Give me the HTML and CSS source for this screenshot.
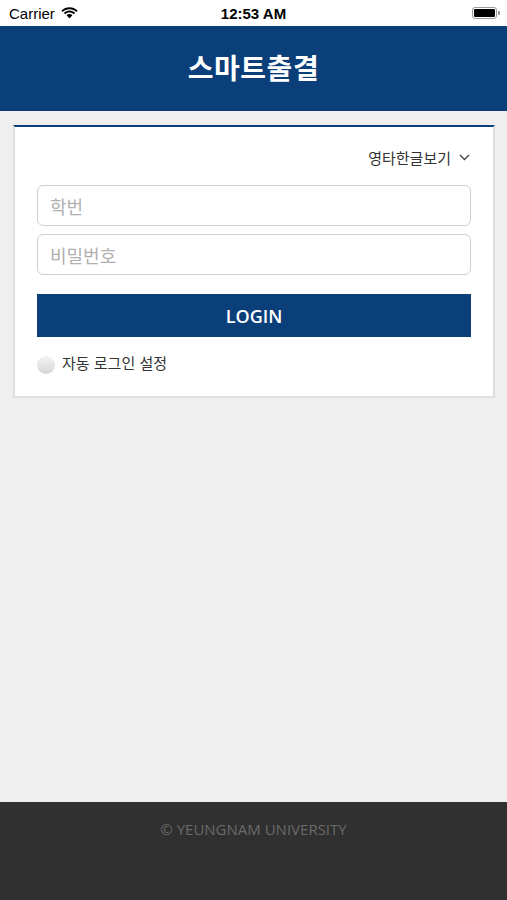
FILE: index.html
```html
<!DOCTYPE html>
<html lang="ko">
<head>
    <meta charset="UTF-8">
    <meta name="viewport" content="width=device-width, initial-scale=1.0">
    <title>스마트출결</title>
    <link rel="stylesheet" href="styles.css">
</head>
<body>
    <div class="status-bar">
        <div class="carrier">
            Carrier
            <svg class="wifi" width="17" height="12" viewBox="0 0 17 12">
                <path d="M8.5 2.2c2.6 0 5 1 6.8 2.7l1.3-1.4C14.4 1.4 11.6.2 8.5.2S2.6 1.4.4 3.5l1.3 1.4C3.5 3.2 5.9 2.2 8.5 2.2z" fill="#000"/>
                <path d="M8.5 5.6c1.6 0 3.1.6 4.3 1.7l1.3-1.4C12.6 4.5 10.6 3.6 8.5 3.6S4.4 4.5 2.9 5.9l1.3 1.4c1.2-1.1 2.7-1.7 4.3-1.7z" fill="#000"/>
                <path d="M8.5 7.1c-1.1 0-2.1.4-2.9 1.1l2.9 3.3 2.9-3.3c-.8-.7-1.800-1.1-2.9-1.1z" fill="#000"/>
            </svg>
        </div>
        <div class="clock">12:53 AM</div>
        <div class="battery">
            <span class="battery-body"><span class="battery-level"></span></span>
            <span class="battery-cap"></span>
        </div>
    </div>

    <header class="top-header">
        <h1>스마트출결</h1>
    </header>

    <main class="content">
        <form class="login-card" action="#" method="post">
            <div class="lang-row">
                <span>영타한글보기</span>
                <svg class="chevron" width="11" height="7" viewBox="0 0 11 7">
                    <path d="M1 1l4.5 4.5L10 1" fill="none" stroke="#444" stroke-width="1.4"/>
                </svg>
            </div>
            <input class="field" type="text" name="student_id" placeholder="학번">
            <input class="field" type="password" name="password" placeholder="비밀번호">
            <button class="login-btn" type="submit">LOGIN</button>
            <label class="auto-login">
                <span class="round-check"></span>
                자동 로그인 설정
            </label>
        </form>
    </main>

    <footer class="site-footer">
        © YEUNGNAM UNIVERSITY
    </footer>
</body>
</html>
```

FILE: styles.css
```css
html, body {
    margin: 0;
    padding: 0;
}
body {
    font-family: "Noto Sans CJK KR", "Noto Sans", sans-serif;
    background-color: #efefef;
    min-height: 100vh;
    display: flex;
    flex-direction: column;
}
.status-bar {
    height: 26px;
    background-color: #fff;
    display: flex;
    align-items: center;
    justify-content: space-between;
    padding: 0 7px 0 9px;
    font-family: "Liberation Sans", Arial, sans-serif;
    font-size: 15px;
    color: #000;
    position: relative;
}
.carrier {
    display: flex;
    align-items: center;
    gap: 6px;
}
.clock {
    position: absolute;
    left: 0;
    right: 0;
    text-align: center;
    font-weight: bold;
    pointer-events: none;
}
.battery {
    display: flex;
    align-items: center;
}
.battery-body {
    width: 25px;
    height: 12px;
    border: 1px solid #999;
    border-radius: 3px;
    padding: 1px;
    box-sizing: border-box;
    display: flex;
}
.battery-level {
    flex: 1;
    background-color: #000;
    border-radius: 1px;
}
.battery-cap {
    width: 2px;
    height: 4px;
    background-color: #999;
    margin-left: 1px;
    border-radius: 0 1px 1px 0;
}
.top-header {
    height: 85px;
    box-sizing: border-box;
    padding-bottom: 3px;
    background-color: #0b3f7a;
    display: flex;
    align-items: center;
    justify-content: center;
}
.top-header h1 {
    margin: 0;
    color: #fff;
    font-size: 28px;
    font-weight: bold;
    letter-spacing: 0.5px;
}
.content {
    flex: 1;
    padding: 14px 12px 0 13px;
}
.login-card {
    background-color: #fff;
    border: 2px solid #dedede;
    border-top: 2px solid #0b3f7a;
    padding: 18px 22px 25px 22px;
    display: flex;
    flex-direction: column;
}
.lang-row {
    height: 24px;
    display: flex;
    align-items: center;
    justify-content: flex-end;
    gap: 8px;
    font-size: 15px;
    color: #333;
    margin-bottom: 16px;
    padding-right: 1px;
}
.field {
    height: 41px;
    box-sizing: border-box;
    border: 1.5px solid #cfcfcf;
    border-radius: 6px;
    padding: 0 12px;
    font-family: "Noto Sans CJK KR", sans-serif;
    font-size: 18px;
    color: #333;
    margin-bottom: 8px;
    outline: none;
}
.field::placeholder {
    color: #b0b0b0;
}
.login-btn {
    margin-top: 11px;
    height: 43px;
    background-color: #0b3f7a;
    color: #fff;
    border: none;
    font-family: "Open Sans", sans-serif;
    font-size: 18px;
    font-weight: 600;
    cursor: pointer;
}
.auto-login {
    margin-top: 16px;
    height: 18px;
    display: flex;
    align-items: center;
    gap: 7px;
    font-size: 15px;
    color: #333;
}
.round-check {
    width: 18px;
    height: 18px;
    border-radius: 50%;
    background: linear-gradient(#f4f4f4, #d6d6d6);
    margin-top: 6px;
}
.site-footer {
    height: 98px;
    box-sizing: border-box;
    background-color: #303030;
    color: #6a6a6a;
    text-align: center;
    font-family: "Open Sans", sans-serif;
    font-size: 15px;
    padding-top: 17px;
}
```
